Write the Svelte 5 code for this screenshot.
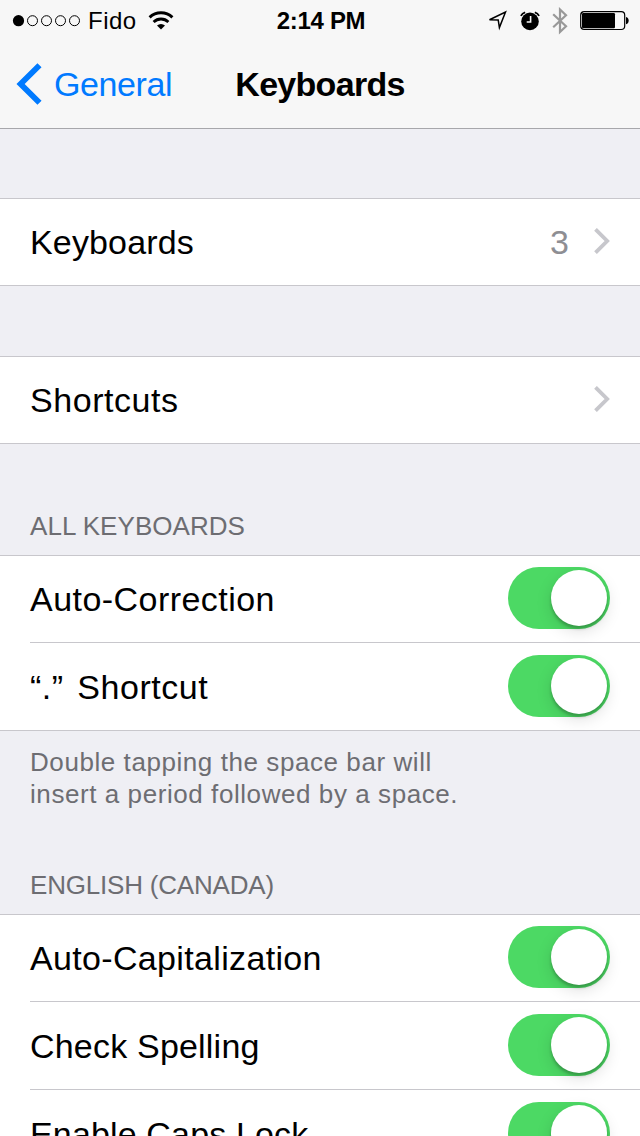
<script>
  const general = [
    { label: 'Keyboards', value: '3', spacing: 0.15 },
    { label: 'Shortcuts', value: '', spacing: 0.55 }
  ];
  const allKeyboards = [
    { label: 'Auto-Correction', spacing: 0.45 },
    { label: '“.” Shortcut', spacing: 0.55, words: 3.5 }
  ];
  const english = [
    { label: 'Auto-Capitalization', spacing: 0.34 },
    { label: 'Check Spelling', spacing: 0.2 },
    { label: 'Enable Caps Lock', spacing: 0.15 }
  ];
</script>

{#snippet switches(rows)}
  <div class="group">
    {#each rows as row}
      <div class="row">
        <span class="label" style="letter-spacing: {row.spacing}px; word-spacing: {row.words ?? 0}px">{row.label}</span>
        <button class="switch" role="switch" aria-checked="true" aria-label={row.label}><span class="knob"></span></button>
      </div>
    {/each}
  </div>
{/snippet}

<div class="screen">
  <header>
    <div class="status">
      <div class="carrier">
        <svg width="68" height="14" viewBox="0 0 68 14">
          <circle cx="6.5" cy="6.7" r="5.6" />
          {#each [20.5, 34.5, 48.5, 62.5] as cx}
            <circle {cx} cy="6.7" r="5" fill="none" stroke="#000" stroke-width="1" />
          {/each}
        </svg>
        <span class="name">Fido</span>
        <svg class="wifi" width="26" height="20" viewBox="0 0 26 20" fill="none" stroke="#000">
          <path d="M1.600 6.300a16.500 16.500 0 0 1 22.800 0" stroke-width="3" />
          <path d="M5.600 11a10.600 10.600 0 0 1 14.800 0" stroke-width="2.800" />
          <path d="M13 18.600L9 14.500a6 6 0 0 1 8 0z" fill="#000" stroke="none" />
        </svg>
      </div>
      <span class="time">2:14 PM</span>
      <div class="indicators">
        <svg width="21" height="21" viewBox="0 0 21 21" fill="none" stroke="#000" stroke-width="1.5">
          <path d="M2.500 9.700L18.500 2L12.400 17.600L11.200 9.900Z" />
        </svg>
        <svg class="alarm" width="20" height="20" viewBox="0 0 20 20">
          <circle cx="10" cy="10.400" r="8.800" />
          <path d="M.9 4.800a7 7 0 0 1 4.300-3.500M19.100 4.800a7 7 0 0 0-4.300-3.500" fill="none" stroke="#000" stroke-width="1.800" />
          <path d="M10.600 4.900v6.100H6.700" fill="none" stroke="#f7f7f7" stroke-width="1.600" />
        </svg>
        <svg class="bluetooth" width="16" height="28" viewBox="0 0 16 28" fill="none" stroke="#999" stroke-width="2.200">
          <path d="M1.200 7.200L14 19.300L8 25V2.500L14 8.200L1.200 20.300" />
        </svg>
        <svg class="battery" width="50" height="20" viewBox="0 0 50 20">
          <rect x=".7" y=".7" width="44" height="17.800" rx="3.500" fill="none" stroke="#000" stroke-width="1.200" />
          <rect x="2" y="2" width="33" height="15.200" rx="1.200" />
          <path d="M46 6c3.600.7 3.600 6.500 0 7.200z" />
        </svg>
      </div>
    </div>
    <nav>
      <button class="back">
        <svg width="26" height="42" viewBox="0 0 26 42" fill="none" stroke="#007aff" stroke-width="5.800">
          <path d="M23.500 2.200L4.600 21L23.500 39.800" />
        </svg>
        <span>General</span>
      </button>
      <h1>Keyboards</h1>
    </nav>
  </header>

  <main>
    {#each general as row}
      <div class="group link">
        <div class="row">
          <span class="label" style="letter-spacing: {row.spacing}px">{row.label}</span>
          <span class="value">{row.value}</span>
          <svg class="chevron" width="16" height="26" viewBox="0 0 16 26" fill="none" stroke="#c7c7cc" stroke-width="3.800">
            <path d="M1.500 1.300L13.200 13L1.500 24.700" />
          </svg>
        </div>
      </div>
    {/each}

    <h2 class="all">ALL KEYBOARDS</h2>
    {@render switches(allKeyboards)}
    <p>Double tapping the space bar will<br />insert a period followed by a space.</p>
    <h2 class="english">ENGLISH (CANADA)</h2>
    {@render switches(english)}
  </main>
</div>

<style>
  :global(body) { margin: 0; }
  .screen {
    width: 640px;
    height: 1136px;
    overflow: hidden;
    background: #efeff4;
    color: #000;
    font-family: "Liberation Sans", Arial, sans-serif;
  }
  svg { display: block; flex: none; }
  button { border: 0; padding: 0; margin: 0; background: none; font: inherit; color: inherit; }
  header { height: 128px; background: #f7f7f7; border-bottom: 1px solid #a7a7ab; }
  .status {
    height: 40px;
    display: grid;
    grid-template-columns: 1fr auto 1fr;
    align-items: center;
    padding: 0 10px 0 12px;
    font-size: 24px;
    line-height: 41px;
  }
  .carrier, .indicators { display: flex; align-items: center; }
  .name { margin-left: 8px; letter-spacing: 0.5px; }
  .wifi { margin-left: 11px; }
  .time { font-weight: 700; letter-spacing: -0.3px; }
  .indicators { justify-content: flex-end; }
  .alarm { margin-left: 12px; }
  .bluetooth { margin-left: 12px; }
  .battery { margin-left: 12px; }
  nav {
    height: 88px;
    display: grid;
    grid-template-columns: 1fr auto 1fr;
    align-items: center;
    padding: 0 16px;
    font-size: 34px;
    line-height: 88px;
  }
  .back { display: flex; align-items: center; gap: 12px; color: #007aff; letter-spacing: -0.4px; }
  h1 { margin: 0; font-size: 34px; font-weight: 700; letter-spacing: -0.7px; }
  .group { background: #fff; border-top: 1px solid #c8c7cc; border-bottom: 1px solid #c8c7cc; }
  .link { margin-top: 69px; }
  .link + .link { margin-top: 70px; }
  .row {
    height: 86px;
    margin-left: 30px;
    padding-right: 30px;
    display: flex;
    align-items: flex-end;
  }
  .row + .row { height: 87px; border-top: 1px solid #c8c7cc; }
  .label { flex: 1; font-size: 34px; line-height: 86px; white-space: pre; }
  .value { font-size: 34px; line-height: 86px; color: #8e8e93; }
  .chevron { margin: 0 0 31px 25px; }
  .switch {
    width: 102px;
    height: 62px;
    flex: none;
    display: flex;
    justify-content: flex-end;
    align-items: center;
    padding-right: 3px;
    margin-bottom: 13px;
    border-radius: 31px;
    background: #4cd964;
  }
  .knob {
    width: 56px;
    height: 56px;
    border-radius: 50%;
    background: #fff;
    box-shadow: 0 3px 3px rgba(0, 0, 0, 0.22), 0 5px 16px rgba(0, 0, 0, 0.13);
  }
  h2, p { margin: 0 30px; font-size: 26px; font-weight: 400; color: #6d6d72; line-height: 32px; }
  .all { padding: 66px 0 13px; letter-spacing: 0.05px; }
  p { padding-top: 15px; letter-spacing: 0.57px; }
  .english { padding: 59px 0 13px; letter-spacing: -0.2px; }
</style>
